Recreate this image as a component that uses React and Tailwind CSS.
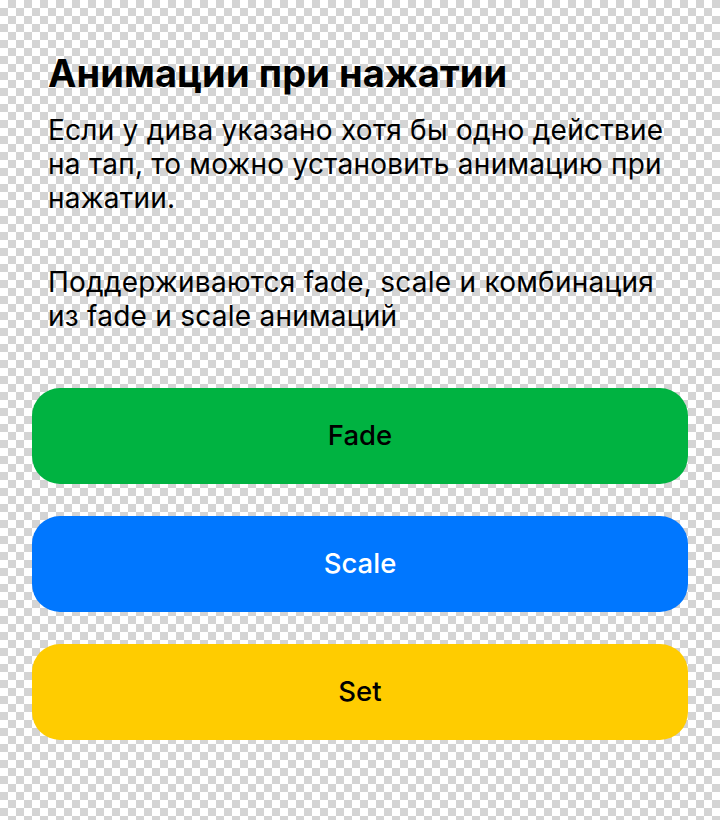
export default function App() {
  const buttons = [
    { label: 'Fade', cls: 'bg-[#00b341] text-black' },
    { label: 'Scale', cls: 'bg-[#0077ff] text-white' },
    { label: 'Set', cls: 'bg-[#ffcc00] text-black' },
  ]

  return (
    <div
      className="min-h-[820px] w-[720px] bg-white bg-[length:16px_16px] bg-[image:conic-gradient(#d4d4d4_25%,#ffffff_0_50%,#d4d4d4_0_75%,#ffffff_0)]"
      style={{ fontFamily: 'Inter, "Noto Sans", sans-serif' }}
    >
      <div className="px-8 pt-[50px]">
        {/* Header + description */}
        <div className="px-4 text-black">
          <h1 className="text-[38px] leading-[46px] font-bold tracking-[0.1px] whitespace-nowrap">
            Анимации при нажатии
          </h1>
          <p className="mt-[17px] text-[28px] leading-[34px] tracking-[0.25px] whitespace-nowrap">
            <span className="block">Если у дива указано хотя бы одно действие</span>
            <span className="block">на тап, то можно установить анимацию при</span>
            <span className="block">нажатии.</span>
          </p>
          <p className="mt-[50px] text-[28px] leading-[34px] tracking-[0.25px] whitespace-nowrap">
            <span className="block">Поддерживаются fade, scale и комбинация</span>
            <span className="block">из fade и scale анимаций</span>
          </p>
        </div>

        {/* Buttons */}
        <div className="mt-[55px] flex flex-col gap-8">
          {buttons.map(({ label, cls }) => (
            <button
              key={label}
              className={`h-24 w-full rounded-[28px] text-[27.5px] font-medium ${cls}`}
            >
              {label}
            </button>
          ))}
        </div>
      </div>
    </div>
  )
}
